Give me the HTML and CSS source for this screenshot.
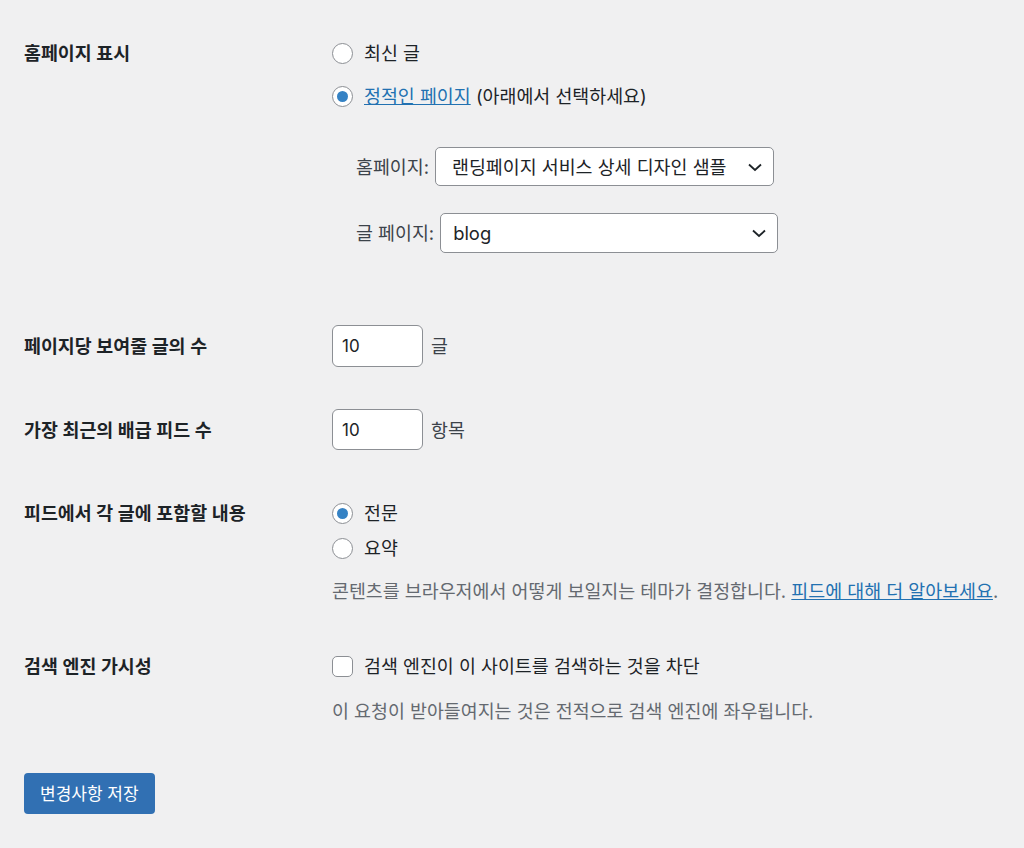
FILE: index.html
```html
<!DOCTYPE html>
<html lang="ko">
<head>
  <meta charset="UTF-8" />
  <meta name="viewport" content="width=device-width, initial-scale=1.0" />
  <title>읽기 설정</title>
  <link rel="stylesheet" href="styles.css">
</head>
<body>
  <form class="settings">
    <div class="row row-front">
      <div class="label">홈페이지 표시</div>
      <div class="field">
        <label class="choice">
          <input type="radio" name="show_on_front" class="radio" />
          <span>최신 글</span>
        </label>
        <label class="choice choice-next">
          <input type="radio" name="show_on_front" class="radio" checked />
          <span><a href="#">정적인 페이지</a> (아래에서 선택하세요)</span>
        </label>
        <div class="page-select page-select-first">
          <span class="select-label">홈페이지:</span>
          <div class="select select-front">
            <span>랜딩페이지 서비스 상세 디자인 샘플</span>
            <svg class="chevron" viewBox="0 0 20 20" width="20" height="20">
              <path d="M4 7.5l6 5.5 6-5.5" fill="none" stroke="#1d2327" stroke-width="1.8" />
            </svg>
          </div>
        </div>
        <div class="page-select page-select-second">
          <span class="select-label">글 페이지:</span>
          <div class="select select-posts">
            <span>blog</span>
            <svg class="chevron" viewBox="0 0 20 20" width="20" height="20">
              <path d="M4 7.5l6 5.5 6-5.5" fill="none" stroke="#1d2327" stroke-width="1.8" />
            </svg>
          </div>
        </div>
      </div>
    </div>

    <div class="row row-posts">
      <div class="label label-input">페이지당 보여줄 글의 수</div>
      <div class="field inline">
        <input type="text" class="number" value="10" />
        <span class="unit">글</span>
      </div>
    </div>

    <div class="row row-feed">
      <div class="label label-input">가장 최근의 배급 피드 수</div>
      <div class="field inline">
        <input type="text" class="number" value="10" />
        <span class="unit">항목</span>
      </div>
    </div>

    <div class="row row-content">
      <div class="label">피드에서 각 글에 포함할 내용</div>
      <div class="field">
        <label class="choice">
          <input type="radio" name="rss_use_excerpt" class="radio" checked />
          <span>전문</span>
        </label>
        <label class="choice choice-tight">
          <input type="radio" name="rss_use_excerpt" class="radio" />
          <span>요약</span>
        </label>
        <p class="description">콘텐츠를 브라우저에서 어떻게 보일지는 테마가 결정합니다. <a href="#">피드에 대해 더 알아보세요</a>.</p>
      </div>
    </div>

    <div class="row row-search">
      <div class="label">검색 엔진 가시성</div>
      <div class="field">
        <label class="choice">
          <input type="checkbox" class="checkbox" />
          <span>검색 엔진이 이 사이트를 검색하는 것을 차단</span>
        </label>
        <p class="description description-search">이 요청이 받아들여지는 것은 전적으로 검색 엔진에 좌우됩니다.</p>
      </div>
    </div>

    <button type="submit" class="save-btn">변경사항 저장</button>
  </form>
</body>
</html>
```

FILE: styles.css
```css
* {
  margin: 0;
  padding: 0;
  box-sizing: border-box;
}

body {
  background-color: #f0f0f1;
  color: #1d2327;
  font-family: Inter, 'Noto Sans CJK KR', sans-serif;
  font-size: 18.4px;
  line-height: 26px;
}

.settings {
  padding: 40px 24px 0 24px;
}

.row {
  display: grid;
  grid-template-columns: 308px 1fr;
  align-items: start;
}

.label {
  font-weight: 600;
}

.label-input {
  line-height: 42px;
}

.row-posts {
  margin-top: 72px;
}

.row-feed {
  margin-top: 42px;
}

.row-content {
  margin-top: 49px;
}

.row-search {
  margin-top: 49px;
}

a {
  color: #2271b1;
  text-decoration: underline;
}

.choice {
  display: flex;
  align-items: center;
  gap: 11px;
}

.choice-next {
  margin-top: 17px;
}

.choice-tight {
  margin-top: 9px;
}

.radio,
.checkbox {
  appearance: none;
  width: 21px;
  height: 21px;
  border: 1px solid #8c8f94;
  background: #fff;
  flex-shrink: 0;
  position: relative;
}

.radio {
  border-radius: 50%;
}

.checkbox {
  border-radius: 5px;
}

.radio:checked::before {
  content: '';
  position: absolute;
  top: 4px;
  left: 4px;
  width: 11px;
  height: 11px;
  border-radius: 50%;
  background: #3582c4;
}

.page-select {
  display: flex;
  align-items: center;
  gap: 6px;
  padding-left: 24px;
  color: #3c434a;
}

.page-select-first {
  margin-top: 38px;
}

.page-select-second {
  margin-top: 27px;
}

.select {
  display: flex;
  align-items: center;
  justify-content: space-between;
  background: #fff;
  border: 1px solid #8c8f94;
  border-radius: 5px;
  color: #1d2327;
  flex-shrink: 0;
}

.select-front {
  width: 339px;
  height: 39px;
  padding: 0 8px 0 16px;
}

.select-posts {
  width: 338px;
  height: 40px;
  padding: 0 8px 0 12px;
}

.chevron {
  display: block;
}

.inline {
  display: flex;
  align-items: center;
  gap: 8px;
}

.number {
  width: 91px;
  height: 42px;
  border: 1px solid #8c8f94;
  border-radius: 6px;
  background: #fff;
  padding: 0 9px;
  font: inherit;
  font-size: 17px;
  color: #1d2327;
}

.row-feed .number {
  height: 41px;
}

.unit {
  color: #3c434a;
}

.description {
  margin-top: 17px;
  color: #646970;
}

.description-search {
  margin-top: 19px;
}

.save-btn {
  display: block;
  margin-top: 49px;
  background: #3170b3;
  color: #fff;
  border: none;
  border-radius: 4px;
  height: 41px;
  padding: 0 16px;
  font: inherit;
  font-size: 17px;
  cursor: pointer;
}
```
